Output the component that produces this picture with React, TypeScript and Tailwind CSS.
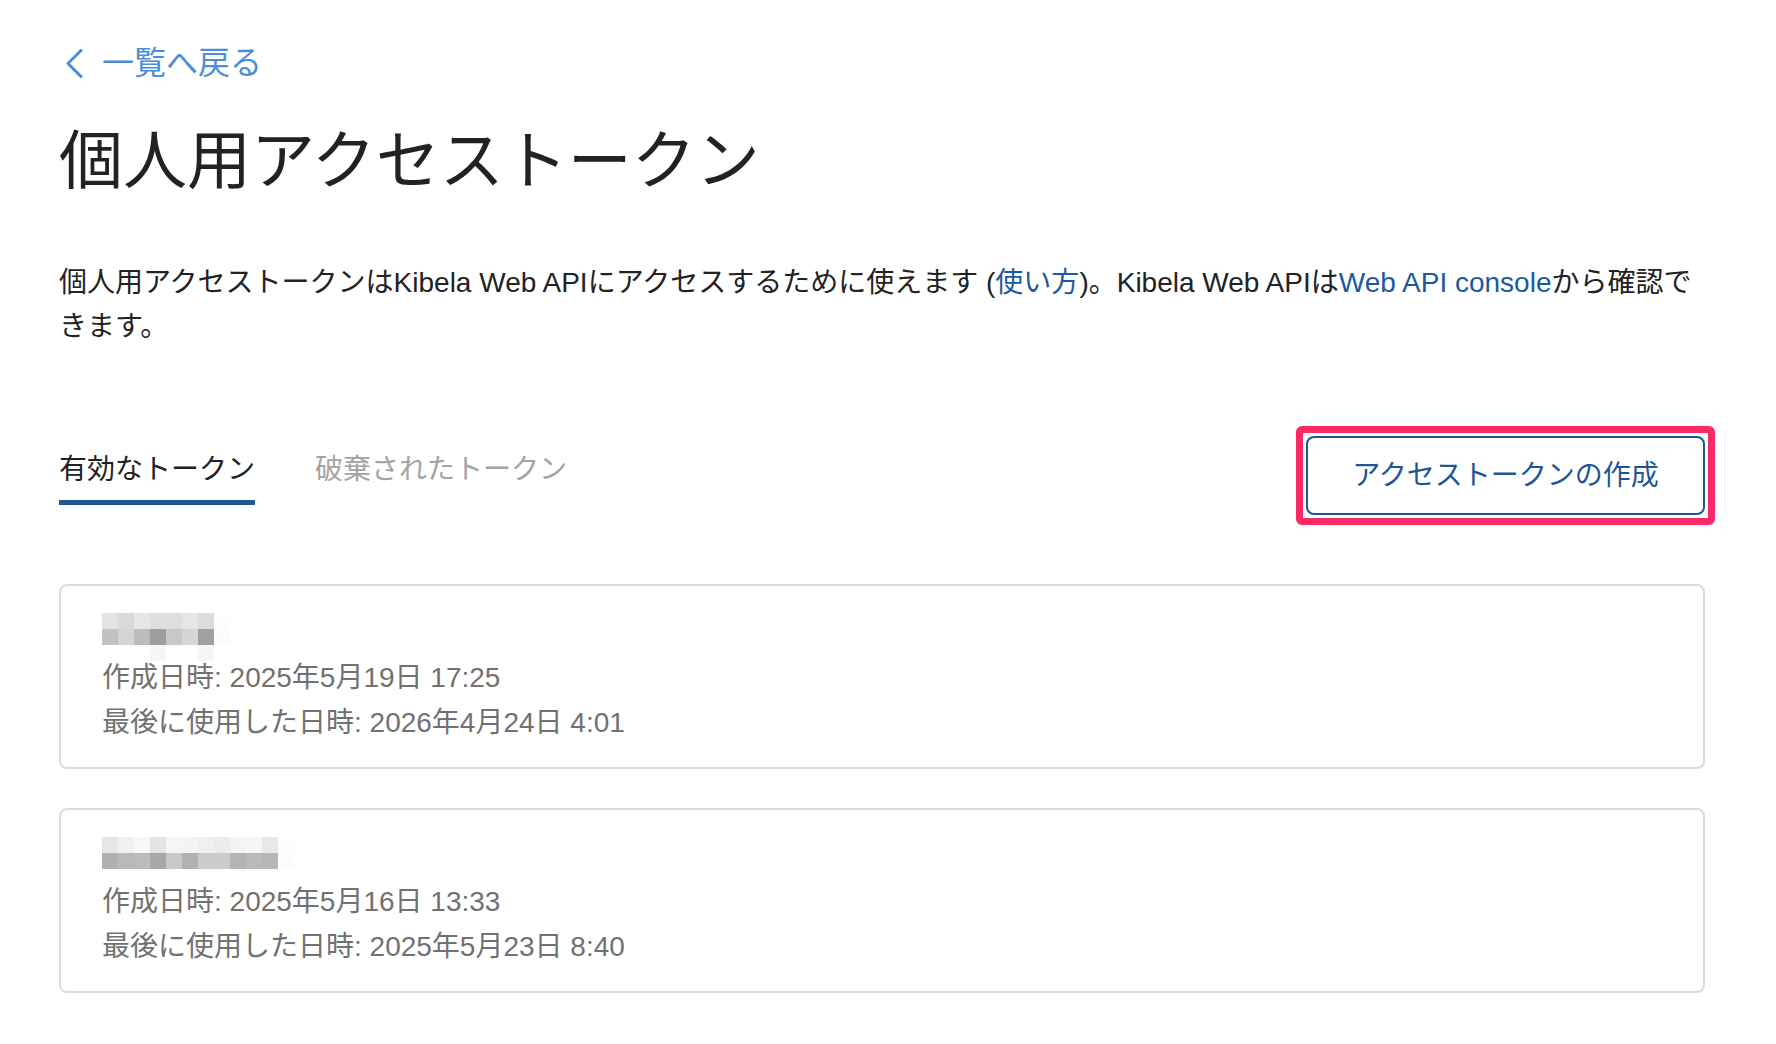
interface Token {
  mosaicTop: string[];
  mosaicBottom: string[];
  faint: number[];
  createdAt: string;
  lastUsedAt: string;
}

const tokens: Token[] = [
  {
    mosaicTop: ["#e3e3e3", "#dadada", "#e6e6e6", "#dedede", "#dedede", "#e6e6e6", "#dcdcdc", "#fdfdfd"],
    mosaicBottom: ["#c2c2c2", "#d4d4d4", "#bcbcbc", "#9e9e9e", "#c8c8c8", "#d6d6d6", "#a0a0a0", "#fbfbfb"],
    faint: [3, 6],
    createdAt: "2025年5月19日 17:25",
    lastUsedAt: "2026年4月24日 4:01",
  },
  {
    mosaicTop: ["#e6e6e6", "#f0f0f0", "#f8f8f8", "#e4e4e4", "#f6f6f6", "#f4f4f4", "#f0f0f0", "#ececec", "#f4f4f4", "#f6f6f6", "#e8e8e8", "#fdfdfd"],
    mosaicBottom: ["#b0b0b0", "#b9b9b9", "#bbbbbb", "#a8a8a8", "#c8c8c8", "#b1b1b1", "#cccccc", "#cccccc", "#b4b4b4", "#bababa", "#b6b6b6", "#fcfcfc"],
    faint: [],
    createdAt: "2025年5月16日 13:33",
    lastUsedAt: "2025年5月23日 8:40",
  },
];

// blurred token name, drawn as a grid of grey cells
function Mosaic({ token }: { token: Token }) {
  return (
    <div className="flex flex-col h-[32px]">
      <div className="flex">
        {token.mosaicTop.map((c, i) => (
          <div key={i} className="w-[16px] h-[16px]" style={{ backgroundColor: c }} />
        ))}
      </div>
      <div className="flex">
        {token.mosaicBottom.map((c, i) => (
          <div key={i} className="relative w-[16px] h-[16px]" style={{ backgroundColor: c }}>
            {token.faint.includes(i) && (
              <div className="absolute left-0 top-[16px] w-[16px] h-[16px] bg-[#f6f6f6]" />
            )}
          </div>
        ))}
      </div>
    </div>
  );
}

function TokenCard({ token }: { token: Token }) {
  return (
    <div className="border-2 border-[#d4dedb] rounded-[8px] pl-[41px] pr-6 pt-[27px] pb-[22px]">
      <Mosaic token={token} />
      <div className="mt-[10px] text-[28px] leading-[45px] text-[#717171]">
        <div>作成日時: {token.createdAt}</div>
        <div>最後に使用した日時: {token.lastUsedAt}</div>
      </div>
    </div>
  );
}

export default function App() {
  return (
    <div
      className="min-h-screen bg-white text-[#222]"
      style={{ fontFamily: '"Liberation Sans", "Noto Sans CJK JP", sans-serif' }}
    >
      <div className="w-[1646px] ml-[59px] pt-[43px] pb-10">
        <a className="flex items-center gap-[19px] text-[32px] leading-[40px] text-[#4b8ed5]">
          <svg width="17" height="29" viewBox="0 0 17 29" fill="none" className="ml-[7px]">
            <polyline
              points="15,1.5 2,14.5 15,27.5"
              stroke="currentColor"
              strokeWidth="3"
              strokeLinecap="round"
              strokeLinejoin="round"
            />
          </svg>
          <span>一覧へ戻る</span>
        </a>

        <h1 className="mt-[38px] text-[64px] leading-[80px] font-normal text-[#222]">
          個人用アクセストークン
        </h1>

        <p className="mt-[60px] text-[28px] leading-[44px]">
          <span>個人用アクセストークンはKibela Web APIにアクセスするために使えます (</span>
          <a className="text-[#1d5a9d]">使い方</a>
          <span>)。Kibela Web APIは</span>
          <a className="text-[#1d5a9d]">Web API console</a>
          <span>から確認で</span>
          <span>きます。</span>
        </p>

        <div className="mt-[87px] flex items-center justify-between">
          <div className="flex gap-[60px] text-[28px] leading-[44px] pt-[2px]">
            <div className="border-b-[5px] border-[#1f5796] pb-[8px] text-[#222]">
              有効なトークン
            </div>
            <div className="pb-[13px] text-[#a3a3a3]">破棄されたトークン</div>
          </div>
          <div className="relative">
            <button className="w-[399px] h-[79px] border-2 border-[#1f5796] rounded-[8px] bg-white text-[28px] text-[#1f5796]">
              アクセストークンの作成
            </button>
            <div className="absolute -inset-[10px] border-[7px] border-[#fb2a66] rounded-[6px] pointer-events-none" />
          </div>
        </div>

        <div className="mt-[69px] flex flex-col gap-[39px]">
          {tokens.map((t, i) => (
            <TokenCard key={i} token={t} />
          ))}
        </div>
      </div>
    </div>
  );
}
